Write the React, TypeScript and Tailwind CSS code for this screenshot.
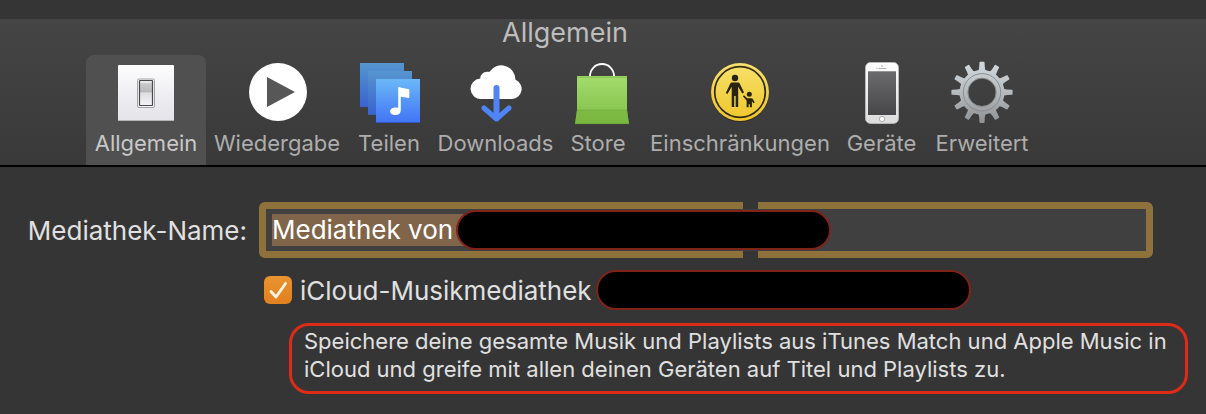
import { useState } from "react"
import type { ReactNode } from "react"

const SwitchIcon = () => (
  <svg viewBox="0 0 64 64" className="size-16" aria-hidden="true">
    <defs>
      <linearGradient id="plate" x1="0" y1="0" x2="0" y2="1">
        <stop offset="0" stopColor="#fdfdfe" />
        <stop offset="1" stopColor="#e2e2e8" />
      </linearGradient>
      <linearGradient id="rocker" x1="0" y1="0" x2="0" y2="1">
        <stop offset="0" stopColor="#d2d2d4" />
        <stop offset="0.45" stopColor="#b8b8bb" />
        <stop offset="0.5" stopColor="#dededf" />
        <stop offset="1" stopColor="#f4f4f8" />
      </linearGradient>
    </defs>
    <rect x="4" y="4" width="56" height="56" rx="1" fill="url(#plate)" />
    <path d="M4 59.500h56" stroke="#b5b5b8" />
    <rect x="23.500" y="18" width="17" height="28.500" rx="1.500" fill="#f5f5f7" stroke="#a5a5a8" strokeWidth="1" />
    <rect x="25.500" y="19.500" width="13" height="25" rx="0.500" fill="url(#rocker)" stroke="#4a4a4c" strokeWidth="1.200" />
    <path d="M26.500 21h11" stroke="#eee" strokeWidth="1.600" />
  </svg>
)

const PlayIcon = () => (
  <svg viewBox="0 0 64 64" className="size-16" aria-hidden="true">
    <circle cx="33" cy="31" r="29" fill="#fff" />
    <path d="M22 16v30l28-15z" fill="#575757" />
  </svg>
)

const ShareIcon = () => (
  <svg viewBox="0 0 64 64" className="size-16" aria-hidden="true">
    <defs>
      <linearGradient id="sheetBack" x1="0" y1="0" x2="0" y2="1">
        <stop offset="0" stopColor="#5695cf" />
        <stop offset="1" stopColor="#3a63d0" />
      </linearGradient>
      <linearGradient id="sheetFront" x1="0" y1="0" x2="0" y2="1">
        <stop offset="0" stopColor="#6bb8f8" />
        <stop offset="1" stopColor="#4275f6" />
      </linearGradient>
    </defs>
    <rect x="3" y="2" width="44" height="44" fill="url(#sheetBack)" />
    <rect x="11" y="10" width="44" height="44" fill="#3b5a9a" />
    <rect x="11" y="10" width="44" height="43.500" fill="url(#sheetBack)" />
    <rect x="19" y="18" width="44" height="44" fill="#3656c0" />
    <rect x="19" y="18" width="44" height="43" fill="url(#sheetFront)" />
    <path
      d="M41.200 26.200c0 0 .8-.6 2 0 2.500 1.200 5.500 1 8.300 1.900q.8.300.8 1.200v6.700q0 1.200-1.200.9c-2.600-.8-5.300-.4-7.300-1.400v13.500c0 3.600-2.500 5.100-5.700 5.100-2.900 0-5-1.200-5-3.500 0-2.700 2.700-4 5.500-4 1.200 0 2 .1 2.600.1z"
      fill="#fff"
    />
  </svg>
)

const DownloadIcon = () => (
  <svg viewBox="0 0 64 64" className="size-16" aria-hidden="true">
    <path
      d="M17.500 38a10 10 0 0 1-1.300-20.600c.2-4.500 4.500-7.700 9-6.500A14.300 14.300 0 0 1 51.500 18.800 10 10 0 0 1 48 38z"
      fill="#fff"
    />
    <path d="M32.500 27v30" stroke="#4f83f6" strokeWidth="6" strokeLinecap="round" />
    <path d="M20 47l12.500 11L45 47" fill="none" stroke="#4f83f6" strokeWidth="5" strokeLinecap="round" strokeLinejoin="round" />
  </svg>
)

const StoreIcon = () => (
  <svg viewBox="0 0 64 64" className="size-16" aria-hidden="true">
    <defs>
      <linearGradient id="bag" x1="0" y1="0" x2="0" y2="1">
        <stop offset="0" stopColor="#a3dc6c" />
        <stop offset="1" stopColor="#7fbd46" />
      </linearGradient>
    </defs>
    <path d="M24 15a12 12 0 0 1 24 0" fill="none" stroke="#fff" strokeWidth="1.800" />
    <path d="M11 15h50v34l2 14H9l2-14z" fill="url(#bag)" />
    <path d="M11 49h50l2 14H9z" fill="#76b33d" fillOpacity="0.600" />
    <path d="M11 49h50" stroke="#6faa3a" strokeWidth="0.600" />
    <path d="M11 16.200h50" stroke="#7dba4a" strokeWidth="0.800" />
    <path d="M9 62.600h54" stroke="#69a135" strokeWidth="0.800" />
  </svg>
)

const ParentalIcon = () => (
  <svg viewBox="0 0 64 64" className="size-16" aria-hidden="true">
    <defs>
      <linearGradient id="badge" x1="0" y1="0" x2="0" y2="1">
        <stop offset="0" stopColor="#f7e06c" />
        <stop offset="1" stopColor="#efc72c" />
      </linearGradient>
    </defs>
    <circle cx="32" cy="32" r="29" fill="#000" fillOpacity="0.300" />
    <circle cx="32" cy="31" r="29" fill="url(#badge)" />
    <circle cx="32" cy="31" r="25.300" fill="none" stroke="#332c12" strokeWidth="1.700" />
    <g fill="#29240f">
      <circle cx="27" cy="17" r="3.200" />
      <path d="M24 21.500h6.200q1 0 1.500 1l4.300 9-1.700 1-4.100-6.800V46h-2.500V35h-1.500v11h-2.500V25.700L19.500 33 17.800 32l4.500-9.500q.5-1 1.700-1z" />
      <circle cx="41.300" cy="33.300" r="2.500" />
      <path d="m36 34.200 3.200 3h4.300q.8 0 1.200.6l2 3.700-1.200.8-1.600-2v5.900h-2v-3h-1.200v3h-2.100v-6.700l-3.700-4.300z" />
    </g>
  </svg>
)

const PhoneIcon = () => (
  <svg viewBox="0 0 64 64" className="size-16" aria-hidden="true">
    <defs>
      <linearGradient id="phoneBody" x1="0" y1="0" x2="0" y2="1">
        <stop offset="0" stopColor="#fff" />
        <stop offset="1" stopColor="#dcdcdc" />
      </linearGradient>
      <linearGradient id="screen" x1="0" y1="0" x2="0" y2="1">
        <stop offset="0" stopColor="#6b6b6d" />
        <stop offset="1" stopColor="#47474a" />
      </linearGradient>
    </defs>
    <rect x="15.500" y="1.500" width="33" height="61" rx="5" fill="url(#phoneBody)" stroke="#bdbdbd" strokeWidth="0.800" />
    <rect x="18" y="10.300" width="28" height="43.700" fill="url(#screen)" />
    <circle cx="32" cy="5" r="0.900" fill="#c4c4c4" />
    <path d="M29 7.500h7" stroke="#a8a8a8" strokeWidth="0.900" strokeLinecap="round" />
    <circle cx="27" cy="7.500" r="0.600" fill="#a8a8a8" />
    <circle cx="32" cy="58" r="2.600" fill="#fff" stroke="#9b9b9b" strokeWidth="0.800" />
  </svg>
)

const TEETH = [0, 30, 60, 90, 120, 150, 180, 210, 240, 270, 300, 330]

const GearIcon = () => (
  <svg viewBox="0 0 64 64" className="size-16" aria-hidden="true">
    <defs>
      <linearGradient id="gear" gradientUnits="userSpaceOnUse" x1="0" y1="0" x2="0" y2="62">
        <stop offset="0" stopColor="#d3dadd" />
        <stop offset="0.500" stopColor="#b6bbbe" />
        <stop offset="1" stopColor="#8f9193" />
      </linearGradient>
      <mask id="gearShape">
        <g fill="#fff">
          {TEETH.map((deg) => (
            <path key={deg} d="M27.500 11.500Q29 9.500 29.200 6L29.500 1.300q.1-.6.800-.6h3.400q.7 0 .8.600L34.800 6Q35 9.500 36.500 11.500z" transform={`rotate(${deg} 32 31.300)`} />
          ))}
          <circle cx="32" cy="31.300" r="22.500" />
        </g>
        <circle cx="32" cy="31.300" r="13.800" fill="#000" />
      </mask>
    </defs>
    <rect width="64" height="64" fill="url(#gear)" mask="url(#gearShape)" />
    <circle cx="32" cy="31.300" r="18.700" fill="none" stroke="#85898b" strokeWidth="0.900" />
    <circle cx="32" cy="31.300" r="14.200" fill="none" stroke="#808385" strokeWidth="0.900" />
  </svg>
)

type Tab = {
  name: string
  icon: ReactNode
  width: string
}

const tabs: Tab[] = [
  { name: "Allgemein", icon: <SwitchIcon />, width: "w-[120px]" },
  { name: "Wiedergabe", icon: <PlayIcon />, width: "w-[142px]" },
  { name: "Teilen", icon: <ShareIcon />, width: "w-[82px]" },
  { name: "Downloads", icon: <DownloadIcon />, width: "w-[131px]" },
  { name: "Store", icon: <StoreIcon />, width: "w-[74px]" },
  { name: "Einschränkungen", icon: <ParentalIcon />, width: "w-[210px]" },
  { name: "Geräte", icon: <PhoneIcon />, width: "w-[73px]" },
  { name: "Erweitert", icon: <GearIcon />, width: "w-[128px]" },
]

const Redacted = ({ className }: { className: string }) => (
  <span className={`relative h-10 w-[375px] shrink-0 rounded-full border-2 border-[#7f2318] bg-black ${className}`} />
)

const App = () => {
  const [active, setActive] = useState("Allgemein")
  const [library, setLibrary] = useState("Mediathek von")
  const [icloud, setIcloud] = useState(true)

  return (
    <div className="min-h-screen bg-[#353535] pt-[19px] font-['Inter','Liberation_Sans',sans-serif] text-[#e0e0e0]">
      <header className="border-b-2 border-black bg-linear-to-b from-[#454545] to-[#393939]">
        <h1 className="pr-[76px] text-center text-[27px] leading-7 text-[#bdbdbd]">Allgemein</h1>
        <nav className="flex pt-2 pl-[86px]">
          {tabs.map((tab) => (
            <button
              key={tab.name}
              type="button"
              onClick={() => setActive(tab.name)}
              className={`flex h-[110px] shrink-0 flex-col items-center rounded-t-lg pt-1.5 text-[22px] leading-7 whitespace-nowrap ${tab.width} ${
                active === tab.name ? "bg-[#505050] text-[#c8c8c8]" : "text-[#adadad]"
              }`}
            >
              {tab.icon}
              <span className="mt-1">{tab.name}</span>
            </button>
          ))}
        </nav>
      </header>

      <main className="pt-[35px] text-[26px] leading-8">
        <div className="flex items-center">
          <label htmlFor="library" className="w-[247px] shrink-0 pt-0.5 text-right whitespace-nowrap">
            Mediathek-Name:
          </label>
          <div className="relative mr-[53px] ml-3 flex h-14 flex-1 items-center rounded-md border-7 border-[#8f713b] bg-[#404040] pl-1.5">
            {/* breaks in the focus ring */}
            <span className="absolute -top-[7px] left-[477px] h-[7px] w-[15px] bg-[#353535]" />
            <span className="absolute -bottom-[7px] left-[477px] h-[7px] w-[15px] bg-[#353535]" />
            <input
              id="library"
              value={library}
              onChange={(e) => setLibrary(e.target.value)}
              className="h-8 w-[204px] bg-[#80654a] text-white outline-none"
            />
            <Redacted className="-ml-5" />
          </div>
        </div>

        <div className="mt-3 ml-[264px] flex h-10 items-center">
          <span className="relative size-7 shrink-0">
            <input
              id="icloud"
              type="checkbox"
              checked={icloud}
              onChange={(e) => setIcloud(e.target.checked)}
              className="block size-7 appearance-none rounded-md bg-linear-to-b from-[#e89430] to-[#e27f1e]"
            />
            {icloud && (
              <svg viewBox="0 0 28 28" className="pointer-events-none absolute inset-0 size-7" aria-hidden="true">
                <path d="m7 15.500 5 5.500L21.500 7.500" fill="none" stroke="#fff3e2" strokeWidth="2.800" strokeLinecap="round" strokeLinejoin="round" />
              </svg>
            )}
          </span>
          <label htmlFor="icloud" className="ml-2 w-[308px] shrink-0 pt-0.5 whitespace-nowrap">
            iCloud-Musikmediathek (
          </label>
          <Redacted className="-ml-3" />
        </div>

        <p className="mt-[13px] mr-[18px] ml-[289px] rounded-[20px] border-3 border-[#dc2c18] px-3 pt-px pb-2 text-[22px] leading-7">
          Speichere deine gesamte Musik und Playlists aus iTunes Match und Apple Music in iCloud und greife mit allen
          deinen Geräten auf Titel und Playlists zu.
        </p>
      </main>
    </div>
  )
}

export default App
